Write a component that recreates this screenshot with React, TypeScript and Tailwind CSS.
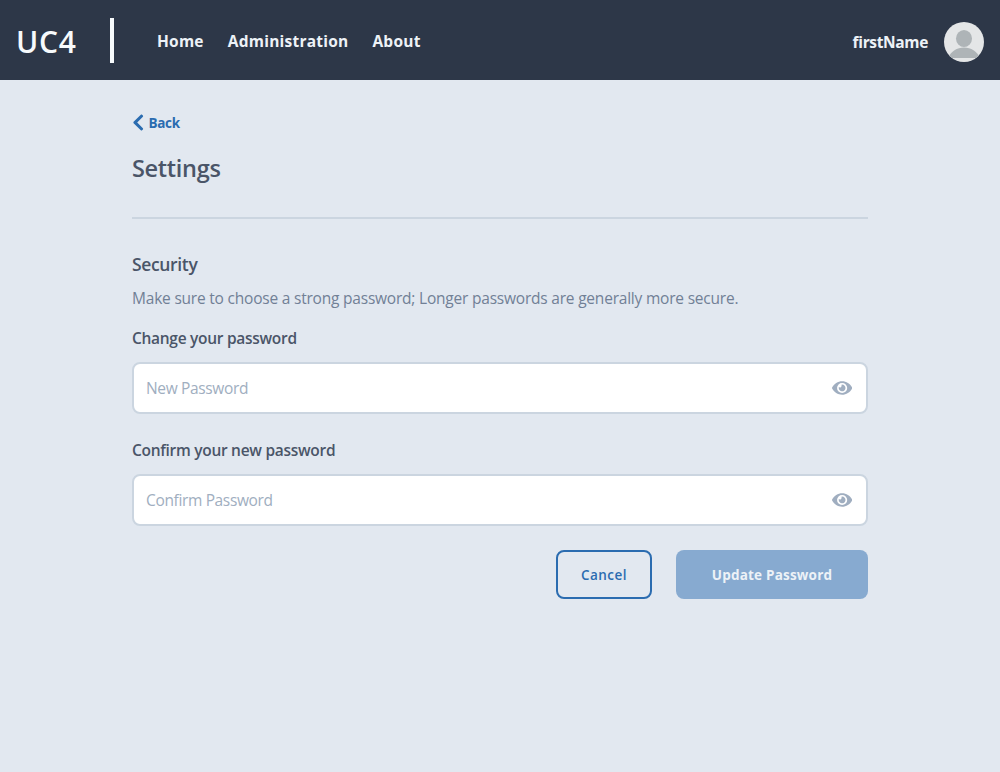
import { FaChevronLeft, FaEye } from "react-icons/fa";

function Avatar() {
  return (
    <svg viewBox="0 0 40 40" className="h-10 w-10 rounded-full">
      <rect width="40" height="40" fill="#e4e6e7" />
      <ellipse cx="20" cy="16.500" rx="8" ry="8.600" fill="#aeb4b7" />
      <path d="M4 36C7 29.500 13 25.600 20 25.600S33 29.500 36 36Z" fill="#aeb4b7" />
    </svg>
  );
}

function PasswordField({ placeholder }: { placeholder: string }) {
  return (
    <div className="flex h-[52px] items-center rounded-lg border-2 border-[#cbd5e0] bg-white pr-[14px] pl-3">
      <input
        type="password"
        placeholder={placeholder}
        className="min-w-0 flex-1 bg-transparent pt-0.5 text-[15.5px] tracking-[-0.35px] outline-none placeholder:text-[#a0aec0]"
      />
      <FaEye className="h-[18px] w-[20.25px] text-[#a0aec0]" />
    </div>
  );
}

export default function App() {
  return (
    <div className="min-h-screen bg-[#e2e8f0] font-['Open_Sans',sans-serif] text-[#4a5568]">
      <header className="flex h-20 items-center bg-[#2d3748] px-4 font-semibold whitespace-nowrap text-[#edf2f7]">
        <div className="flex w-[94px] items-center pt-[3px] text-[30px] leading-9 tracking-[0.7px] text-[#f7fafc]">UC4</div>
        <div className="mt-px h-[45px] w-1 bg-[#f7fafc]" />
        <nav className="ml-[43px] flex gap-6 pt-px text-[15.5px] leading-6 font-bold tracking-[0.23px]">
          <a>Home</a>
          <a>Administration</a>
          <a>About</a>
        </nav>
        <div className="ml-auto flex items-center gap-4 pt-1">
          <span className="pt-0.5 text-[15.5px] font-bold tracking-[-0.35px]">firstName</span>
          <Avatar />
        </div>
      </header>

      <main className="mx-auto flex w-[736px] flex-col pt-8">
        <a className="flex h-[22px] items-center gap-1 text-[13.5px] font-bold tracking-[-0.3px] text-[#2b6cb0]">
          <FaChevronLeft className="-mt-px h-[19px] w-[12.5px]" />
          Back
        </a>
        <h1 className="mt-4 text-[23.5px] leading-9 font-semibold tracking-[-0.3px]">Settings</h1>
        <hr className="mt-[31px] border-t-2 border-[#cbd5e0]" />
        <h2 className="mt-[31px] text-[17.5px] leading-7 font-semibold tracking-[-0.35px]">Security</h2>
        <p className="mt-2 text-[15.5px] leading-6 tracking-[-0.21px] text-[#718096]">
          Make sure to choose a strong password; Longer passwords are generally more secure.
        </p>
        <label className="mt-4 mb-3 text-[15.5px] leading-6 font-semibold tracking-[-0.29px]">Change your password</label>
        <PasswordField placeholder="New Password" />
        <label className="mt-6 mb-3 text-[15.5px] leading-6 font-semibold tracking-[-0.29px]">Confirm your new password</label>
        <PasswordField placeholder="Confirm Password" />
        <div className="mt-6 flex justify-end gap-6 text-[13.5px] font-bold">
          <button className="h-[49px] w-24 rounded-lg border-2 border-[#2b6cb0] pt-0.5 font-semibold tracking-[0.5px] text-[#2b6cb0]">Cancel</button>
          <button className="h-[49px] w-48 rounded-lg bg-[#87aad0] pt-0.5 tracking-[0.2px] text-[#edf2f7]">Update Password</button>
        </div>
      </main>
    </div>
  );
}
